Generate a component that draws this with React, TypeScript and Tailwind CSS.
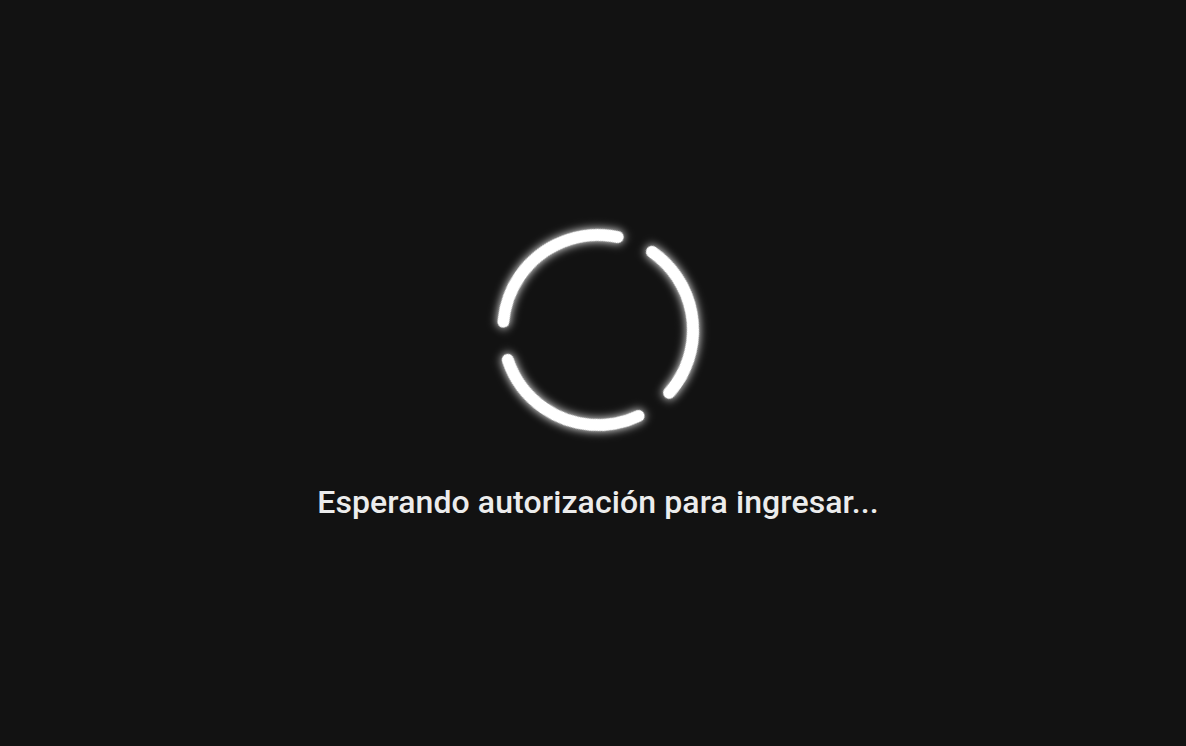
import React from "react";

export default function App() {
  const r = 95;
  const c = 2 * Math.PI * r;
  const seg = c / 3;
  const gap = 38.5;
  return (
    <div className="w-full h-screen bg-[#121212] flex flex-col items-center justify-center pl-[10px] pb-[18px]" style={{ fontFamily: "Roboto, 'Noto Sans', sans-serif" }}>
      <div className="w-[236px] h-[240px] flex items-center justify-center">
        <svg width="236" height="240" viewBox="0 0 236 240" className="overflow-visible">
          <defs>
            <filter id="glow" x="-30%" y="-30%" width="160%" height="160%">
              <feGaussianBlur in="SourceGraphic" stdDeviation="5" result="b" />
              <feMerge>
                <feMergeNode in="b" />
                <feMergeNode in="SourceGraphic" />
              </feMerge>
            </filter>
          </defs>
          <circle
            cx="118"
            cy="120"
            r={r}
            fill="none"
            stroke="#ffffff"
            strokeWidth="12"
            strokeLinecap="round"
            strokeDasharray={`${seg - gap} ${gap}`}
            transform="rotate(-55.4 118 120)"
            filter="url(#glow)"
          />
        </svg>
      </div>
      <p className="mt-[36px] text-[32px] font-medium text-[#ececec] tracking-[0.1px] leading-none">
        Esperando autorización para ingresar...
      </p>
    </div>
  );
}
